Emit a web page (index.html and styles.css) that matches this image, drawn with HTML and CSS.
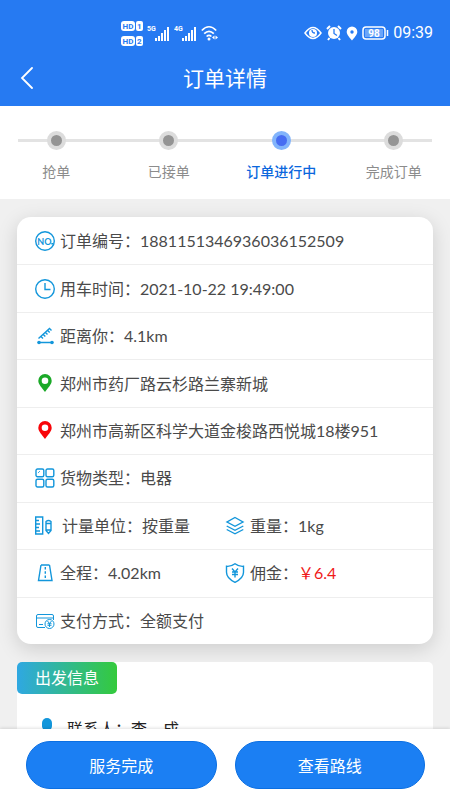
FILE: index.html
```html
<!DOCTYPE html>
<html lang="zh-CN">
<head>
<meta charset="utf-8">
<meta name="viewport" content="width=device-width, initial-scale=1">
<title>订单详情</title>
<link rel="stylesheet" href="styles.css">
</head>
<body>
<div class="app">
  <header class="header">
    <div class="status">
      <div class="status-group">
        <svg width="22" height="26" viewBox="0 0 22 26" aria-hidden="true">
          <g fill="#fff"><rect x="0" y="1" width="14" height="10" rx="3"/><rect x="15" y="1" width="7" height="10" rx="2"/><rect x="0" y="16" width="14" height="10" rx="3"/><rect x="15" y="16" width="7" height="10" rx="2"/></g>
          <g class="badge-text"><text x="1.500" y="9">HD</text><text x="16" y="9">1</text><text x="1.500" y="24">HD</text><text x="16" y="24">2</text></g>
        </svg>
        <svg class="signal" width="23" height="18" viewBox="0 0 23 18" aria-hidden="true">
          <text class="net-text" x="0" y="7">5G</text>
          <path d="M9 14v3M12 12v5M15 9v8M18 6v11M21 3v14" stroke="#fff" stroke-width="2"/>
        </svg>
        <svg class="signal" width="23" height="18" viewBox="0 0 23 18" aria-hidden="true">
          <text class="net-text" x="0" y="7">4G</text>
          <path d="M9 14v3M12 12v5M15 9v8M18 6v11M21 3v14" stroke="#fff" stroke-width="2"/>
        </svg>
        <svg width="18" height="16" viewBox="0 0 18 16" aria-hidden="true">
          <g fill="none" stroke="#fff" stroke-width="1.700"><path d="M.8 5.500q7.200-7.500 14.400 0M3.200 8.700q4.800-4.800 9.600 0M5.600 11.500q2.400-2.300 4.800 0"/></g>
          <circle cx="8" cy="14" r="1.500" fill="#fff"/><path d="M13.500 10.500v4L11 12.500zM14.500 10.500v4l2.500-2z" fill="#fff"/>
        </svg>
      </div>
      <div class="status-group status-right">
        <svg width="18" height="14" viewBox="0 0 18 14" aria-hidden="true">
          <path d="M1 7q8-11 16 0q-8 11-16 0z" fill="none" stroke="#fff" stroke-width="1.500"/><circle cx="9" cy="7" r="4" fill="#fff"/><path d="M8 4q0 3 3 3" fill="none" stroke="#267af2" stroke-width="1.300"/>
        </svg>
        <svg width="16" height="16" viewBox="0 0 16 16" aria-hidden="true">
          <path d="M1 4l3-3M15 4l-3-3M3.500 13L2 15M12.500 13l1.500 2" stroke="#fff" stroke-width="2"/><circle cx="8" cy="8" r="6" fill="#fff"/><path d="M8 4v4.500l3 2" fill="none" stroke="#267af2" stroke-width="1.300"/>
        </svg>
        <svg width="12" height="15" viewBox="0 0 12 15" aria-hidden="true">
          <path d="M6 .5a5.300 5.300 0 0 1 5.300 5.300C11.300 9 8 12 6 14.500C4 12 .7 9 .7 5.800A5.300 5.300 0 0 1 6 .5z" fill="#fff"/><circle cx="6" cy="6" r="1.700" fill="#267af2"/>
        </svg>
        <svg width="27" height="14" viewBox="0 0 27 14" aria-hidden="true">
          <rect x="1" y="1" width="22" height="12" rx="3" fill="none" stroke="#fff" stroke-width="1.500"/><rect x="3" y="3" width="18" height="8" fill="#6ba5f9"/><path d="M25.500 4v6" stroke="#fff" stroke-width="1.500"/><text class="battery-text" x="12" y="11" text-anchor="middle">98</text>
        </svg>
        <span class="clock">09:39</span>
      </div>
    </div>
    <div class="titlebar">
      <button class="back" type="button" aria-label="返回">
        <svg width="14" height="22" viewBox="0 0 14 22" aria-hidden="true"><path d="M12 1L2 11l10 10" fill="none" stroke="#fff" stroke-width="1.800" stroke-linecap="round"/></svg>
      </button>
      <h1 class="title">订单详情</h1>
    </div>
  </header>

  <ol class="steps">
    <li class="step"><span class="dot"></span><span>抢单</span></li>
    <li class="step"><span class="dot"></span><span>已接单</span></li>
    <li class="step active" aria-current="step"><span class="dot"></span><span>订单进行中</span></li>
    <li class="step"><span class="dot"></span><span>完成订单</span></li>
  </ol>

  <main class="content">
    <section class="card order">
      <div class="row"><div class="cell">
        <svg class="icon" viewBox="0 0 20 20" aria-hidden="true"><circle cx="10" cy="10" r="9.300"/><text class="no-text" x="2.300" y="13.500">NO</text><path d="M16.300 12.700h1.700"/></svg>
        <span>订单编号：</span><span>1881151346936036152509</span></div></div>
      <div class="row"><div class="cell">
        <svg class="icon" viewBox="0 0 20 20" aria-hidden="true"><circle cx="10" cy="10" r="9.300"/><path d="M10 4v6.500h5.500"/></svg>
        <span>用车时间：</span><span>2021-10-22 19:49:00</span></div></div>
      <div class="row"><div class="cell">
        <svg class="icon" viewBox="0 0 20 20" aria-hidden="true"><path d="M4 16.500h13M3.500 12.500L15 2M6 10.500l2 2M8.300 8.500l2 2M10.500 6.500l2 2M12.700 4.500l2 2M14.500 2.500l2 2"/><g class="solid"><circle cx="4" cy="16.500" r="1.800"/><circle cx="17" cy="16.500" r="1.800"/></g></svg>
        <span>距离你：</span><span>4.1km</span></div></div>
      <div class="row"><div class="cell">
        <svg class="icon pin-start" viewBox="0 0 20 20" aria-hidden="true"><path fill-rule="evenodd" d="M10 0a6.700 6.700 0 0 1 6.700 6.700C16.700 10.500 13 13.500 10 18C7 13.500 3.300 10.500 3.300 6.700A6.700 6.700 0 0 1 10 0zm0 3.400a3.300 3.300 0 1 0 0 6.600a3.300 3.300 0 0 0 0-6.600z"/></svg>
        <span>郑州市药厂路云杉路兰寨新城</span></div></div>
      <div class="row"><div class="cell">
        <svg class="icon pin-end" viewBox="0 0 20 20" aria-hidden="true"><path fill-rule="evenodd" d="M10 0a6.700 6.700 0 0 1 6.700 6.700C16.700 10.500 13 13.500 10 18C7 13.500 3.300 10.500 3.300 6.700A6.700 6.700 0 0 1 10 0zm0 3.400a3.300 3.300 0 1 0 0 6.600a3.300 3.300 0 0 0 0-6.600z"/></svg>
        <span>郑州市高新区科学大道金梭路西悦城18楼951</span></div></div>
      <div class="row"><div class="cell">
        <svg class="icon" viewBox="0 0 20 20" aria-hidden="true"><rect x="1" y="1" width="7.800" height="7.800" rx="1.500"/><rect x="11" y="1" width="7.800" height="7.800" rx="1.500"/><rect x="1" y="11.200" width="7.800" height="7.800" rx="1.500"/><rect x="11" y="11.200" width="7.800" height="7.800" rx="1.500"/><path d="M3 5l2-2" stroke-width=".8"/></svg>
        <span>货物类型：</span><span>电器</span></div></div>
      <div class="row split"><div class="cell">
        <svg class="icon wide" viewBox="0 0 22 20" aria-hidden="true"><path d="M.7 1h7v17h-7zM1 4.500h3M1 8h4M1 11.500h3M1 15h4M11 5.500q2.500-2 5 0v9l-2.500 3l-2.500-3zM11 7.500h5M11 14h5"/></svg>
        <span>计量单位：</span><span>按重量</span></div>
        <div class="cell">
        <svg class="icon" viewBox="0 0 20 20" aria-hidden="true"><path d="M10 1.500l8 4.500L10 10.300L2 6zM1.700 10l8.300 4.300L18.300 10M1.700 13.500l8.300 4.300l8.300-4.300"/></svg>
        <span>重量：</span><span>1kg</span></div></div>
      <div class="row split"><div class="cell">
        <svg class="icon" viewBox="0 0 20 20" aria-hidden="true"><path d="M6 2h8.500M6 2L3.500 17.500h13.500L14.500 2"/><path d="M10.300 4v12" stroke-dasharray="2.500 1.800"/></svg>
        <span>全程：</span><span>4.02km</span></div>
        <div class="cell">
        <svg class="icon" viewBox="0 0 20 20" aria-hidden="true"><path d="M10 .8q4 3 8.500 2.500v6q0 6-8.500 10q-8.500-4-8.500-10v-6Q6 3.800 10 .8zM7 5.500l3 3.500l3-3.500M7 9h6M7 11.500h6M10 9v5.500"/></svg>
        <span>佣金：</span><span class="price">￥6.4</span></div></div>
      <div class="row"><div class="cell">
        <svg class="icon thin" viewBox="0 0 20 20" aria-hidden="true"><path d="M10 16.500H3q-1.500 0-1.500-1.500V5q0-1.500 1.500-1.500h14q1.500 0 1.500 1.500v4M1.500 7h17M4 13.500h4"/><circle cx="14.500" cy="13" r="4.500"/><path d="M12.500 10l2 2.500l2-2.500M12.500 12.700h4M12.500 14.300h4M14.500 12.500V16"/></svg>
        <span>支付方式：</span><span>全额支付</span></div></div>
    </section>

    <section class="card depart">
      <h2 class="tag">出发信息</h2>
      <div class="contact">
        <svg width="20" height="24" viewBox="0 0 20 24" aria-hidden="true"><rect x="5" y="1" width="10" height="13" rx="5" fill="#1296db"/><path d="M2 23q0-7 8-8q8 1 8 8z" fill="#1296db"/></svg>
        <span>联系人：李　成</span>
      </div>
    </section>
  </main>

  <footer class="actions">
    <button class="btn" type="button">服务完成</button>
    <button class="btn" type="button">查看路线</button>
  </footer>
</div>
</body>
</html>
```
FILE: styles.css
```css
* { box-sizing: border-box; }

body {
  margin: 0;
  font: 16px/24px Lato, "Noto Sans CJK SC", sans-serif;
  color: #4a4a4a;
  background: #f0f0f0;
}

h1, h2, ol { margin: 0; padding: 0; font-weight: 400; }
button { font: inherit; color: inherit; cursor: pointer; }
svg { display: block; flex: none; }

.app { display: flex; flex-direction: column; height: 100vh; }

.header { background: #267af2; color: #fff; padding-bottom: 3px; }
.status {
  display: flex;
  justify-content: space-between;
  align-items: center;
  padding: 20px 17px 4px 121px;
}
.status-group { display: flex; align-items: center; gap: 4px; }
.status-right { gap: 4px; }
.clock { font: 16px/20px Roboto, sans-serif; }
.badge-text { font: bold 8px Roboto, sans-serif; fill: #267af2; }
.net-text { font: bold 7px Roboto, sans-serif; fill: #fff; }
.battery-text { font: bold 10px Roboto, sans-serif; fill: #fff; }

.titlebar {
  display: grid;
  grid-template-columns: 54px 1fr 54px;
  align-items: center;
  padding-top: 3px;
  height: 53px;
}
.back {
  display: flex;
  padding: 10px 20px;
  border: 0;
  background: none;
}
.title { font-size: 21px; line-height: 32px; text-align: center; }

.steps {
  display: grid;
  grid-template-columns: repeat(4, 1fr);
  padding: 25px 0 17px;
  list-style: none;
  background: linear-gradient(#e3e3e3, #e3e3e3) center 33px / calc(100% - 36px) 3px no-repeat #fff;
}
.step {
  display: flex;
  flex-direction: column;
  align-items: center;
  gap: 11px;
  font-size: 14px;
  line-height: 21px;
  color: #8c8c8c;
}
.dot {
  width: 19px;
  height: 19px;
  border: 4px solid #dcdcdc;
  border-radius: 50%;
  background: #949494;
}
.active { color: #0b67dd; font-weight: 500; }
.active .dot { border-color: #82b4fb; background: #476df2; }

.content {
  flex: 1;
  min-height: 0;
  padding: 18px 17px 0;
  overflow-y: auto;
  scrollbar-width: none;
}
.card { background: #fff; }
.order {
  display: grid;
  grid-auto-rows: 1fr;
  min-height: 427px;
  border-radius: 14px;
  box-shadow: 0 5px 20px rgba(0, 0, 0, .15);
}
.row { display: grid; align-items: center; padding: 0 18px; }
.row + .row { border-top: 1px solid #eee; }
.split { grid-template-columns: 1fr 1fr; }
.cell { display: flex; align-items: center; white-space: nowrap; }
.icon {
  width: 20px;
  height: 20px;
  margin-right: 5px;
  fill: none;
  stroke: #1296db;
  stroke-width: 1.4;
}
.icon.wide { width: 22px; }
.icon.thin { stroke-width: 1; }
.icon.pin-start { fill: #1ba928; stroke: none; }
.icon.pin-end { fill: #f80509; stroke: none; }
.solid { fill: #1296db; stroke: none; }
.no-text { font: bold 9px Lato, sans-serif; fill: #1296db; stroke: none; }
.price { color: #f01818; }

.depart { margin-top: 18px; border-radius: 5px; }
.tag {
  width: fit-content;
  padding: 4px 18px;
  border-radius: 5px;
  font-size: 16px;
  color: #fff;
  background: linear-gradient(90deg, #2fa8e2, #34ca3c);
}
.contact {
  display: flex;
  align-items: center;
  gap: 10px;
  padding: 23px 20px;
  color: #222;
}

.actions {
  z-index: 1;
  display: grid;
  grid-template-columns: 1fr 1fr;
  gap: 18px;
  padding: 12px 25px 11px 26px;
  background: #fff;
  box-shadow: 0 -1px 3px rgba(0, 0, 0, .12);
}
.btn {
  height: 48px;
  padding-top: 2px;
  border: 1px solid #0b6fe2;
  border-radius: 24px;
  color: #fff;
  background: #1b7ff3;
}
```
